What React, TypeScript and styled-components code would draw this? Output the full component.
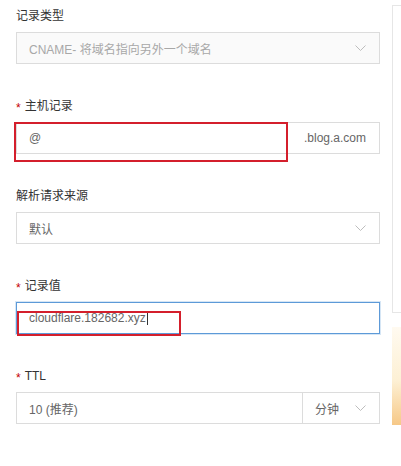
import React from "react";
import styled, { createGlobalStyle } from "styled-components";

const Global = createGlobalStyle`
  html, body { margin: 0; padding: 0; background: #fff; }
  body { font-family: "Liberation Sans", "Noto Sans CJK SC", sans-serif; }
`;

const Page = styled.div`
  width: 401px;
  height: 466px;
  display: flex;
  overflow: hidden;
  background: #fff;
`;

const Form = styled.div`
  width: 364px;
  flex-shrink: 0;
  padding: 6px 0 0 16px;
  display: flex;
  flex-direction: column;
  gap: 32px;
`;

const Field = styled.div`
  display: flex;
  flex-direction: column;
  gap: 6px;
`;

const Label = styled.div`
  height: 20px;
  line-height: 20px;
  font-size: 12px;
  color: #333;
  display: flex;
  align-items: center;
`;

const Star = styled.span`
  color: #c40000;
  font-size: 12px;
  margin-right: 4px;
  position: relative;
  top: 2px;
`;

const Row = styled.div`
  position: relative;
  display: flex;
  height: 32px;
`;

const Box = styled.div<{ $disabled?: boolean; $focused?: boolean; $width?: number }>`
  box-sizing: border-box;
  height: 32px;
  ${(p) => (p.$width ? `width: ${p.$width}px; flex-shrink: 0;` : "flex: 1;")}
  display: flex;
  align-items: center;
  justify-content: space-between;
  padding: 0 13px 0 12px;
  border: 1px solid ${(p) => (p.$focused ? "#5d9ad8" : "#dcdcdc")};
  box-shadow: ${(p) => (p.$focused ? "0 0 0 1px rgba(93,154,216,0.25)" : "none")};
  background: ${(p) => (p.$disabled ? "#fafafa" : "#fff")};
  font-size: 12px;
  color: ${(p) => (p.$disabled ? "#a8a8a8" : "#666")};
  & + & {
    border-left: none;
  }
`;

const Text = styled.span`
  white-space: nowrap;
  display: inline-flex;
  align-items: center;
`;

const Caret = styled.span`
  display: inline-block;
  width: 1px;
  height: 14px;
  background: #333;
  margin-left: 1px;
`;

const Addon = styled.div`
  box-sizing: border-box;
  width: 93px;
  height: 32px;
  flex-shrink: 0;
  border: 1px solid #dcdcdc;
  display: flex;
  align-items: center;
  justify-content: flex-end;
  padding-right: 13px;
  font-size: 12px;
  color: #666;
`;

const Mark = styled.div<{ $l: number; $t: number; $w: number; $h: number }>`
  position: absolute;
  left: ${(p) => p.$l}px;
  top: ${(p) => p.$t}px;
  width: ${(p) => p.$w}px;
  height: ${(p) => p.$h}px;
  box-sizing: border-box;
  border: 2px solid #d41f2c;
  pointer-events: none;
`;

const Side = styled.div`
  margin-left: 12px;
  padding-top: 5px;
  display: flex;
  flex-direction: column;
  gap: 14px;
`;

const Panel = styled.div`
  width: 20px;
  height: 308px;
  box-sizing: border-box;
  border: 1px solid #e6e6e6;
`;

const Glow = styled.div`
  width: 20px;
  height: 98px;
  background: linear-gradient(180deg, #fffaf0 0%, #fdf0d4 55%, #f6c887 100%);
`;

const Chevron = () => (
  <svg width="11" height="6" viewBox="0 0 11 6" fill="none">
    <path d="M0.5 0.5 L5.5 5.5 L10.5 0.5" stroke="#bdbdbd" strokeWidth="1" />
  </svg>
);

export default function App() {
  return (
    <>
      <Global />
      <Page>
        <Form>
          <Field>
            <Label>记录类型</Label>
            <Row>
              <Box $disabled>
                <Text>CNAME- 将域名指向另外一个域名</Text>
                <Chevron />
              </Box>
            </Row>
          </Field>
          <Field>
            <Label>
              <Star>*</Star>主机记录
            </Label>
            <Row>
              <Box>
                <Text>@</Text>
              </Box>
              <Addon>.blog.a.com</Addon>
              <Mark $l={-2} $t={0} $w={274} $h={40} />
            </Row>
          </Field>
          <Field>
            <Label>解析请求来源</Label>
            <Row>
              <Box>
                <Text>默认</Text>
                <Chevron />
              </Box>
            </Row>
          </Field>
          <Field>
            <Label>
              <Star>*</Star>记录值
            </Label>
            <Row>
              <Box $focused>
                <Text>
                  cloudflare.182682.xyz
                  <Caret />
                </Text>
              </Box>
              <Mark $l={1} $t={9} $w={164} $h={25} />
            </Row>
          </Field>
          <Field>
            <Label>
              <Star>*</Star>TTL
            </Label>
            <Row>
              <Box>
                <Text>10 (推荐)</Text>
              </Box>
              <Box $width={77}>
                <Text>分钟</Text>
                <Chevron />
              </Box>
            </Row>
          </Field>
        </Form>
        <Side>
          <Panel />
          <Glow />
        </Side>
      </Page>
    </>
  );
}
